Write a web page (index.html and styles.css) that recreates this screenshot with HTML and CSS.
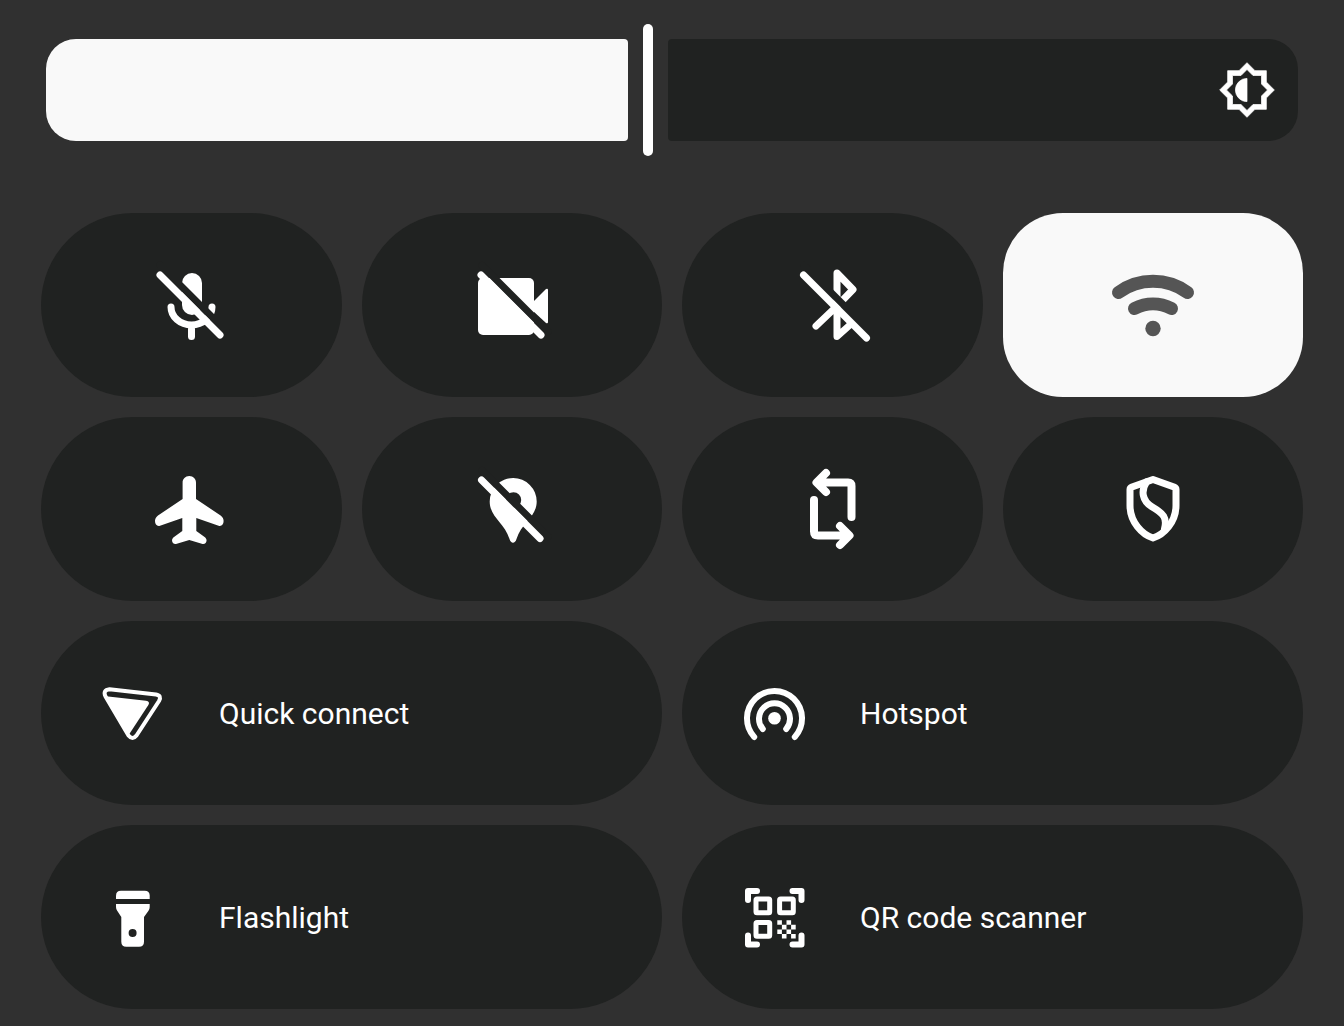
FILE: index.html
```html
<!DOCTYPE html>
<html lang="en">
<head>
    <meta charset="UTF-8">
    <meta name="viewport" content="width=device-width, initial-scale=1.0">
    <title>Quick Settings</title>
    <link rel="stylesheet" href="styles.css">
</head>
<body>
    <main class="panel">
        <div class="brightness" id="brightness" style="--level: 48">
            <div class="level"></div>
            <div class="handle"></div>
            <div class="rest">
                <svg class="sun" viewBox="0 0 24 24" aria-hidden="true">
                    <path fill-rule="evenodd" d="M20 15.31L23.31 12 20 8.69V4h-4.69L12 .69 8.69 4H4v4.69L.69 12 4 15.31V20h4.69L12 23.31 15.31 20H20zM18 14.48V18h-3.52L12 20.48 9.52 18H6v-3.52L3.52 12 6 9.52V6h3.52L12 3.52 14.48 6H18v3.52L20.48 12z"/>
                    <path d="M12 7.2a4.8 4.8 0 0 0 0 9.6z"/>
                </svg>
            </div>
            <input type="range" id="brightnessInput" min="0" max="100" value="48" aria-label="Brightness">
        </div>

        <div class="tiles">
            <button class="tile" aria-label="Microphone off">
                <svg class="icon" viewBox="1 0 100 100">
                    <rect x="42" y="18" width="20" height="42" rx="10"/>
                    <path class="line" d="M31 52a20.5 18 0 0 0 41 0M51.5 70v11.5"/>
                    <path class="gap" d="M20 10l66 66"/>
                    <path class="line" d="M20 20l60 60"/>
                </svg>
            </button>
            <button class="tile" aria-label="Camera off">
                <svg class="icon" viewBox="0 0 100 100">
                    <rect x="16" y="23" width="56" height="57" rx="5"/>
                    <path d="M71 47l13-13q2-1 2 1v32q0 2-2 1L71 56z"/>
                    <path class="gap" d="M20 10.5l66 66"/>
                    <path class="line" d="M19 20l60 60"/>
                </svg>
            </button>
            <button class="tile" aria-label="Bluetooth off">
                <svg class="icon" viewBox="-2 0 100 100">
                    <path class="line" d="M53 52V18l16 16.5L53 51 32 71M53 52v29.5L67 69"/>
                    <path class="gap" d="M20 10.5l66 66"/>
                    <path class="line" d="M19.5 20l63 63"/>
                </svg>
            </button>
            <button class="tile active" aria-label="Wi-Fi on">
                <svg class="icon" viewBox="3 0 100 100">
                    <path class="wave" d="M18.5 37.5a59 59 0 0 1 69 0M34.5 53.5a41 41 0 0 1 37 0"/>
                    <circle cx="53" cy="73.5" r="7.7"/>
                </svg>
            </button>
            <button class="tile" aria-label="Airplane mode">
                <svg class="icon" viewBox="1 -1 100 100">
                    <path d="M49.3 16c-4 0-6.7 3-6.7 6.700V39L18 55.500c-2 1.400-3 3.500-3 5.500 0 3.500 2 5.500 5 4.700L42.300 58v13L34 77c-3.500 2.500-2 7.500 2 7l13.300-4 13.300 4c4 .5 5.500-4.500 2-7l-8.300-6V58l22.300 7.700c3 .8 5-1.200 5-4.700 0-2-1-4.100-3-5.500L56 39V22.700c0-3.700-2.700-6.700-6.700-6.700z"/>
                </svg>
            </button>
            <button class="tile" aria-label="Location off">
                <svg class="icon" viewBox="0 -1 100 100">
                    <path fill-rule="evenodd" d="M51.2 18a23.5 23.5 0 0 0-23.5 23.5C27.7 57 42 62 47.5 79c1.500 5 5.500 5 7 0C60 62 74.700 57 74.700 41.500A23.500 23.500 0 0 0 51.200 18zM51.500 32.300a7.700 7.700 0 1 1 0 15.400 7.700 7.700 0 0 1 0-15.400z"/>
                    <path class="gap" d="M20 10.5l66 66"/>
                    <path class="line" d="M19.5 20l58.5 58.5"/>
                </svg>
            </button>
            <button class="tile" aria-label="Auto rotate">
                <svg class="icon" viewBox="-3 -1 100 100">
                    <path class="line thick" d="M32 22.5h31q3.500 0 3.500 3.500v31M41 13l-9.500 9.500L41 32M29 40v31.500q0 4 4 4h31M55 66l9.500 9.500L55 85"/>
                </svg>
            </button>
            <button class="tile" aria-label="Private DNS">
                <svg class="icon" viewBox="3 -1 100 100">
                    <path class="line" d="M53 19.500L32 27q-2 .8-2 2.500v16C30 62 42 74.500 53 78c11-3.500 23-16 23-32.500v-16q0-1.700-2-2.500z"/>
                    <path class="line" d="M46.500 22c-6 9-4 19 5 24.500 12 7 16 11 13 22.500"/>
                </svg>
            </button>
            <button class="tile wide">
                <svg class="icon" viewBox="-3 -2 90 90">
                    <path class="outline" d="M19.500 19.200L66 24.500q6 1 3 6.500L46.500 65.500q-4 5-8 0L15.500 26.500q-3-6.500 4-7.300z"/>
                    <path d="M16 26.200l40 4.500q4.500.8 2.200 4.600L40 63l-2 2z"/>
                </svg>
                <span>Quick connect</span>
            </button>
            <button class="tile wide">
                <svg class="icon" viewBox="-2 -2 90 90">
                    <circle cx="44.500" cy="48.300" r="6.300"/>
                    <path class="ring" d="M32.800 59a15.500 15.500 0 1 1 23.400 0M24.200 67a27.500 27.500 0 1 1 40.600 0"/>
                </svg>
                <span>Hotspot</span>
            </button>
            <button class="tile wide">
                <svg class="icon" viewBox="-3 2 90 90">
                    <path d="M26 29v-3.300q0-5 5-5h23.700q5 0 5 5V29z"/>
                    <path fill-rule="evenodd" d="M26 34h33.700v3q0 2-1.200 3.800L54 47v24.700q0 5-5 5H36.300q-5 0-5-5V47l-4.100-6.200Q26 39 26 37zM42.600 59a4 4 0 1 0 0 8 4 4 0 0 0 0-8z"/>
                </svg>
                <span>Flashlight</span>
            </button>
            <button class="tile wide">
                <svg class="icon" viewBox="-2 2 90 90">
                    <path class="ring" d="M18 30v-9h9M62.500 21h9v9M71.500 65.500v9h-9M27 74.500h-9v-9"/>
                    <g class="module">
                        <rect x="26" y="29" width="13.700" height="13.700" rx="1"/>
                        <rect x="49.600" y="29" width="13.700" height="13.700" rx="1"/>
                        <rect x="26" y="52.500" width="13.700" height="13.700" rx="1"/>
                    </g>
                    <path d="M47.300 50.200h4.600v4.600h-4.600zM56.500 50.200h4.600v4.600h-4.600zM51.900 54.800h4.600v4.600h-4.600zM61.100 54.800h4.600v4.600h-4.600zM47.300 59.400h4.600V64h-4.600zM56.500 59.400h4.600V64h-4.600zM51.900 64h4.600v4.600h-4.600zM61.100 64h4.600v4.600h-4.600z"/>
                </svg>
                <span>QR code scanner</span>
            </button>
        </div>
    </main>

    <script>
        const brightness = document.getElementById('brightness');
        const brightnessInput = document.getElementById('brightnessInput');

        brightnessInput.addEventListener('input', () => {
            brightness.style.setProperty('--level', brightnessInput.value);
        });
    </script>
</body>
</html>
```
FILE: styles.css
```css
* {
    box-sizing: border-box;
}
body {
    margin: 0;
    background-color: #303030;
    color: #fff;
    font-family: Roboto, sans-serif;
}
.panel {
    padding: 24px 41px 17px;
}
.brightness {
    position: relative;
    display: flex;
    align-items: center;
    gap: 15px;
    margin: 0 5px 57px;
}
.level, .rest {
    height: 102px;
    flex-basis: 0;
    min-width: 0;
}
.level {
    flex-grow: var(--level);
    background-color: #f9f9f9;
    border-radius: 30px 4px 4px 30px;
}
.rest {
    flex-grow: calc(100 - var(--level));
    display: flex;
    align-items: center;
    justify-content: flex-end;
    background-color: #202221;
    border-radius: 4px 30px 30px 4px;
    overflow: hidden;
}
.handle {
    width: 10px;
    height: 132px;
    background-color: #fff;
    border-radius: 5px;
}
.sun {
    flex: none;
    width: 58px;
    height: 58px;
    margin-right: 22px;
    fill: #fff;
    stroke: #fff;
    stroke-width: 0.3px;
}
/* the real slider lies over the drawn one */
.brightness input {
    position: absolute;
    inset: 0;
    width: 100%;
    height: 100%;
    margin: 0;
    opacity: 0;
    cursor: pointer;
}
.tiles {
    display: grid;
    grid-template-columns: repeat(4, 1fr);
    gap: 20px;
}
.tile {
    display: flex;
    align-items: center;
    justify-content: center;
    height: 184px;
    padding: 0;
    border: none;
    border-radius: 92px;
    background-color: #202221;
    color: #fff;
    font-family: inherit;
    font-size: 30px;
    cursor: pointer;
}
.tile.active {
    background-color: #f9f9f9;
    color: #555;
    border-radius: 60px;
}
.tile.wide {
    grid-column: span 2;
    justify-content: flex-start;
    gap: 42px;
    padding-left: 46px;
}
.icon {
    width: 100px;
    height: 100px;
    fill: currentColor;
}
.wide .icon {
    width: 90px;
    height: 90px;
}
.line, .gap, .wave, .ring, .outline, .module {
    fill: none;
    stroke: currentColor;
    stroke-width: 7px;
    stroke-linecap: round;
    stroke-linejoin: round;
}
.gap {
    stroke: #202221;
}
.thick {
    stroke-width: 8px;
}
.wave {
    stroke-width: 13px;
}
.ring {
    stroke-width: 6px;
}
.outline {
    stroke-width: 4px;
}
.module {
    stroke-width: 5px;
}
```
